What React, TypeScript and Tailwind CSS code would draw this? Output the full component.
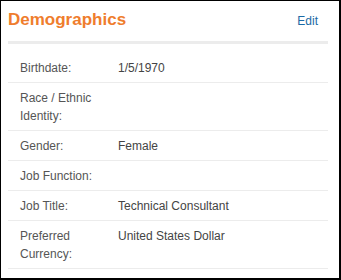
import React from 'react';

const rows = [
  { label: 'Birthdate:', value: '1/5/1970' },
  { label: 'Race / Ethnic Identity:', value: '' },
  { label: 'Gender:', value: 'Female' },
  { label: 'Job Function:', value: '' },
  { label: 'Job Title:', value: 'Technical Consultant' },
  { label: 'Preferred Currency:', value: 'United States Dollar' },
];

export default function App() {
  return (
    <div
      className="w-[341px] h-[280px] bg-white border-black border-t border-l border-r-2 border-b-2 pl-[7px] pr-[11px] pt-[9px]"
      style={{ fontFamily: '"Liberation Sans", Arial, sans-serif' }}
    >
      {/* Header */}
      <div className="flex items-baseline justify-between pr-[10px] mb-[10px]">
        <h2 className="text-[17px] leading-[20px] font-bold text-[#ef7d2d]">Demographics</h2>
        <a className="text-[12px] leading-[20px] text-[#1b6aa5] cursor-pointer">Edit</a>
      </div>
      <div className="h-[3px] bg-[#ececec] mb-[9px]" />

      {/* Rows */}
      <div>
        {rows.map((row) => (
          <div
            key={row.label}
            className="flex border-b border-[#ececec] pt-[6px] pb-[5px] text-[12px] leading-[18px]"
          >
            <div className="w-[110px] pl-[12px] pr-[16px] text-[#555]">{row.label}</div>
            <div className="flex-1 text-[#444]">{row.value}</div>
          </div>
        ))}
      </div>
    </div>
  );
}
